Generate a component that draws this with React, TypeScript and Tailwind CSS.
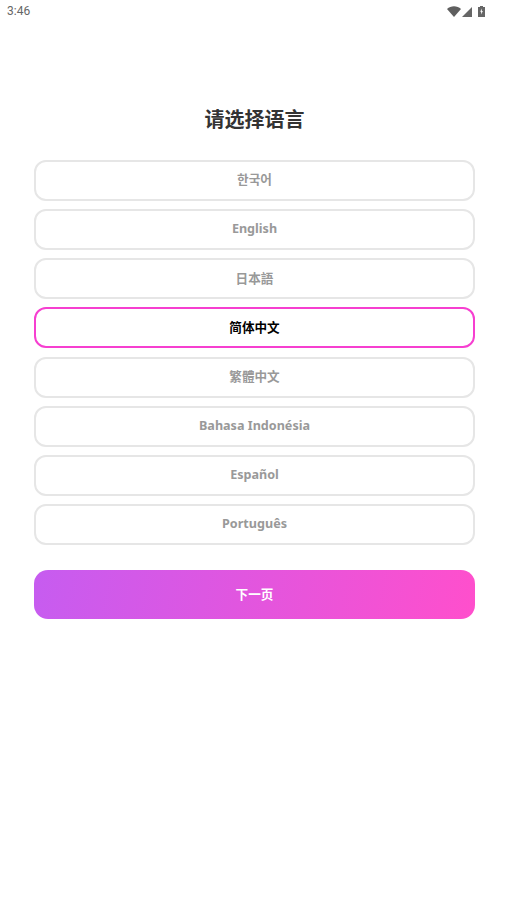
import React from "react";

const languages = ["한국어", "English", "日本語", "简体中文", "繁體中文", "Bahasa Indonésia", "Español", "Português"];
const font = "font-['Noto_Sans','Noto_Sans_CJK_SC',sans-serif]";

const StatusBar = () => (
  <div className="h-[22px] px-[7px] flex items-center justify-between">
    <span className="font-['Roboto',sans-serif] text-[12px] leading-[22px] text-[#666666]">3:46</span>
    <div className="flex items-center mr-[17px] gap-[1px]">
      <svg width="14" height="11" viewBox="0 0 14 11" className="block">
        <path d="M0 3 C3.8 -0.8 10.2 -0.8 14 3 L7 11 Z" fill="#5f5f5f" />
      </svg>
      <svg width="10" height="10" viewBox="0 0 10 10" className="block mt-[1px]">
        <path d="M10 0 V10 H0 Z" fill="#666666" />
      </svg>
      <svg width="7" height="11" viewBox="0 0 7 11" className="block ml-[5px]">
        <path d="M2 0 H5 V1 H7 V11 H0 V1 H2 Z" fill="#666666" />
        <path d="M3.9 2.6 L2.2 5.8 H3.2 L3 8.6 L4.9 5 H3.8 Z" fill="#ffffff" />
      </svg>
    </div>
  </div>
);

export default function App() {
  return (
    <div className={`w-[509px] h-[905px] bg-white overflow-hidden ${font}`}>
      <StatusBar />
      <div className="px-[34px] pt-[83px]">
        <h1 className="text-center text-[20px] leading-[30px] font-bold text-[#333333]">请选择语言</h1>
        <div className="mt-[25px] flex flex-col gap-[8.15px]">
          {languages.map((lang) => {
            const selected = lang === "简体中文";
            return (
              <button
                key={lang}
                className={`h-[41px] rounded-[12px] border-2 bg-white text-[12.6px] leading-[19.5px] font-bold pb-[1px] flex items-center justify-center ${
                  selected ? "border-[#f63fd0] text-black" : "border-[#e6e6e6] text-[#999999]"
                }`}
              >
                {lang}
              </button>
            );
          })}
        </div>
        <button className="mt-[25px] w-full h-[49px] rounded-[14px] bg-linear-[100deg] from-[#c65cf0] to-[#ff4fcc] text-white text-[12.6px] leading-[19.5px] font-bold flex items-center justify-center">
          下一页
        </button>
      </div>
    </div>
  );
}
